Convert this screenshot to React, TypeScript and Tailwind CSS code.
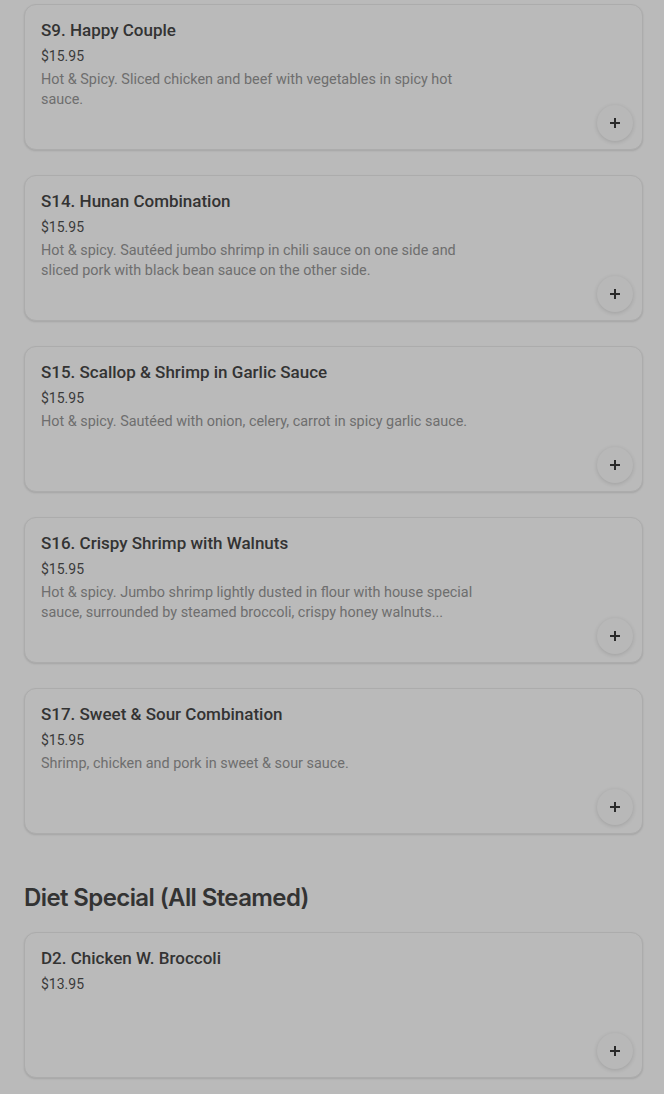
import React from "react";

type Item = { name: string; price: string; desc?: string };

const special: Item[] = [
  { name: "S9. Happy Couple", price: "$15.95", desc: "Hot & Spicy. Sliced chicken and beef with vegetables in spicy hot sauce." },
  { name: "S14. Hunan Combination", price: "$15.95", desc: "Hot & spicy. Sautéed jumbo shrimp in chili sauce on one side and sliced pork with black bean sauce on the other side." },
  { name: "S15. Scallop & Shrimp in Garlic Sauce", price: "$15.95", desc: "Hot & spicy. Sautéed with onion, celery, carrot in spicy garlic sauce." },
  { name: "S16. Crispy Shrimp with Walnuts", price: "$15.95", desc: "Hot & spicy. Jumbo shrimp lightly dusted in flour with house special sauce, surrounded by steamed broccoli, crispy honey walnuts..." },
  { name: "S17. Sweet & Sour Combination", price: "$15.95", desc: "Shrimp, chicken and pork in sweet & sour sauce." },
];

const diet: Item[] = [{ name: "D2. Chicken W. Broccoli", price: "$13.95" }];

function Card({ item }: { item: Item }) {
  return (
    <div className="flex h-[146px] rounded-xl border border-[#acacac] bg-[#bababa] shadow-[0_1px_2px_rgba(0,0,0,0.12)]">
      <div className="flex-1 pl-4 pt-[13px]">
        <div className="text-[17px] leading-6 font-medium text-[#333333]">{item.name}</div>
        <div className="mt-[4px] text-[14px] leading-5 text-[#3a3a3a]">{item.price}</div>
        {item.desc && (
          <div className="mt-[4px] w-[440px] text-[14.4px] leading-5 text-[#6e6e6e] line-clamp-2">{item.desc}</div>
        )}
      </div>
      <div className="flex items-end pb-[8px] pr-[9px]">
        <div className="flex h-9 w-9 items-center justify-center rounded-full bg-[#b8b8b8] shadow-[0_1px_4px_rgba(0,0,0,0.14)]">
          <svg width="12" height="12" viewBox="0 0 12 12">
            <path d="M6 1v10M1 6h10" stroke="#2a2a2a" strokeWidth="2" />
          </svg>
        </div>
      </div>
    </div>
  );
}

export default function App() {
  return (
    <div
      className="min-h-[1094px] bg-[#bababa] pl-6 pr-[21px] pt-[4px]"
      style={{ fontFamily: "Roboto, 'Noto Sans', sans-serif" }}
    >
      <div className="flex flex-col gap-[25px]">
        {special.map((it) => (
          <Card key={it.name} item={it} />
        ))}
      </div>
      <h2
        className="mt-[46px] mb-[16px] text-[24px] leading-9 font-semibold tracking-[-0.6px] text-[#333333]"
        style={{ fontFamily: "Inter, sans-serif" }}
      >
        Diet Special (All Steamed)
      </h2>
      <div className="flex flex-col gap-[25px]">
        {diet.map((it) => (
          <Card key={it.name} item={it} />
        ))}
      </div>
    </div>
  );
}
